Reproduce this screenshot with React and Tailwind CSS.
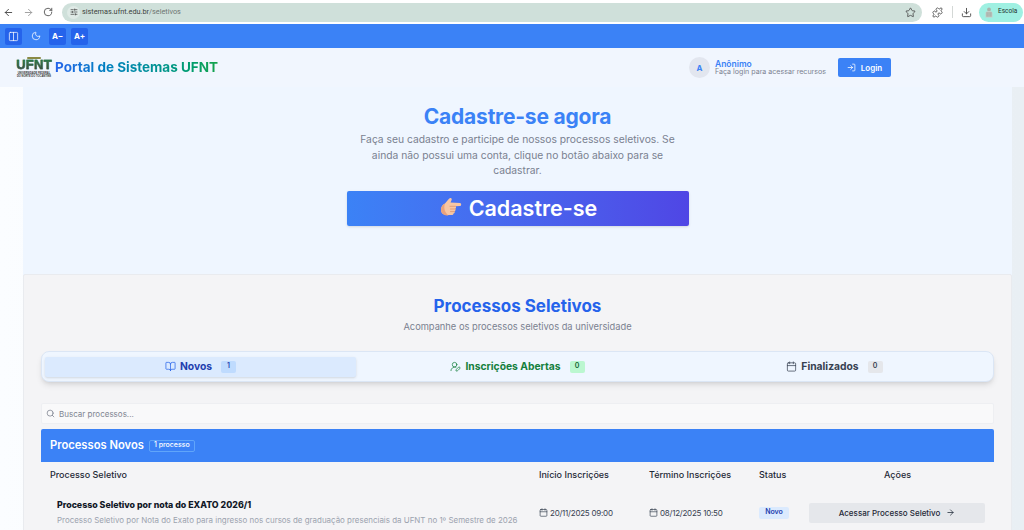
import React from 'react';
import { ArrowLeft, ArrowRight, RotateCw, SlidersHorizontal, Star, Puzzle, Download, Columns2, Moon, LogIn, BookOpen, UserRoundPen, Calendar, Search } from 'lucide-react';

const font = { fontFamily: '"Inter", "Liberation Sans", sans-serif' };
const chromeFont = { fontFamily: '"Roboto", sans-serif' };

const PointingHand = () => (
  <svg width="22" height="22" viewBox="0 0 22 22">
    <path d="M1 13c0-3 1.500-5.500 4-6.500C6.500 4.500 8.500 2 10 1c1.500-.5 2.200 1 1.500 2.200L10.500 5.500l9.500.4c1.600.1 1.600 3 0 3.100l-4.500.3c.8.7.7 2-.2 2.500.6.800.3 2-.6 2.400.4.900-.1 2-1.200 2.200-.1 1-.9 1.600-1.900 1.600H8.500C4 18.500 1 16.500 1 13z" fill="#f7c6a3" />
    <path d="M1 13c0-3 1.500-5.500 4-6.500-1 2.500-1 6 .5 8.500.8 1.300 2 2.600 3 3.500C4 18.500 1 16.500 1 13z" fill="#e9a27c" />
    <path d="M10 9.300h5.300M10.500 12h5M10.500 14.600h4" stroke="#dc9470" strokeWidth=".8" strokeLinecap="round" fill="none" />
  </svg>
);

const ChromeBar = () => (
  <div className="h-6 bg-white flex items-center text-[#474747]">
    <div className="flex items-center w-[62px] pl-[3px] gap-[9px] shrink-0">
      <ArrowLeft size={11} strokeWidth={2} />
      <ArrowRight size={11} strokeWidth={2} className="text-[#9a9a9a]" />
      <RotateCw size={10} strokeWidth={2} />
    </div>
    <div className="w-[860px] h-[19px] rounded-full bg-[#cfe0da] flex items-center pl-[5px] pr-[6px] shrink-0">
      <span className="w-[13px] h-[13px] rounded-full bg-[#dfeae6] flex items-center justify-center">
        <SlidersHorizontal size={8} strokeWidth={2.2} />
      </span>
      <span className="ml-[2px] text-[7.300px] text-[#3d4440]" style={chromeFont}>
        sistemas.ufnt.edu.br<span className="text-[#6d7571]">/seletivos</span>
      </span>
      <Star size={11} strokeWidth={1.8} className="ml-auto" />
    </div>
    <Puzzle size={11} strokeWidth={1.8} className="ml-[10px]" />
    <span className="w-px h-3 bg-[#d4d8d6] ml-[9px]" />
    <Download size={11} strokeWidth={2} className="ml-[8px]" />
    <div className="ml-[7px] w-[44px] h-[19px] rounded-full bg-[#9ff0e2] flex items-center pl-[5px] gap-[4px]">
      <svg width="10" height="13" viewBox="0 0 13 15">
        <circle cx="6.500" cy="3.500" r="2.500" fill="#a9b4ac" />
        <path d="M2 14V8c0-1.500 2-2.500 4.500-2.500S11 6.500 11 8v6z" fill="#c8cec8" />
        <path d="M4 7v6M6.500 7v6M9 7v6" stroke="#7d8a80" strokeWidth=".8" />
      </svg>
      <span className="text-[6.500px] text-[#24302c]" style={chromeFont}>Escola</span>
    </div>
  </div>
);

const ToolBar = () => (
  <div className="h-6 bg-[#3b82f6] flex items-center pl-[5px] gap-[5px] text-white">
    <span className="w-[17px] h-[17px] rounded-[2px] bg-[#2563eb] flex items-center justify-center">
      <Columns2 size={11} strokeWidth={1.6} />
    </span>
    <span className="w-[17px] h-[17px] flex items-center justify-center">
      <Moon size={10} strokeWidth={1.8} />
    </span>
    <span className="w-[17px] h-[17px] rounded-[2px] bg-[#2563eb] flex items-center justify-center text-[8px] font-bold">A−</span>
    <span className="w-[17px] h-[17px] rounded-[2px] bg-[#2563eb] flex items-center justify-center text-[8px] font-bold">A+</span>
  </div>
);

const Logo = () => (
  <div className="w-[34px] flex flex-col items-center leading-none" style={{ fontFamily: '"Liberation Sans", sans-serif' }}>
    <span className="h-[2px] w-[14px] bg-[#8a8a45] rounded-full" />
    <span className="text-[13px] tracking-[0.02em] font-bold leading-[12px] bg-gradient-to-b from-[#1f8a4c] to-[#37423c] bg-clip-text text-transparent [-webkit-text-stroke:0.4px_#2c5a40]">UFNT</span>
    <span className="mt-[1px] text-[2.600px] leading-[3px] font-bold text-[#333] whitespace-nowrap">UNIVERSIDADE FEDERAL</span>
    <span className="text-[2.600px] leading-[3px] font-bold text-[#333] whitespace-nowrap">DO NORTE DO TOCANTINS</span>
  </div>
);

const Header = () => (
  <header className="h-[39px] bg-[#f1f6fe] flex items-center pl-[17px]">
    <Logo />
    <h1 className="ml-[4px] text-[13.500px] font-bold bg-gradient-to-r from-[#2563eb] to-[#16a34a] bg-clip-text text-transparent">Portal de Sistemas UFNT</h1>
    <div className="ml-auto flex items-center mr-[133px]">
      <span className="w-[21px] h-[21px] rounded-full bg-[#e2e6ef] flex items-center justify-center text-[8px] font-bold text-[#3b82f6]">A</span>
      <div className="ml-[5px] leading-[8px]">
        <div className="text-[8.500px] font-semibold text-[#3b82f6]">Anônimo</div>
        <div className="text-[7.100px] text-[#7a8190]">Faça login para acessar recursos</div>
      </div>
      <button className="ml-[12px] w-[53px] h-[19px] rounded-[2px] bg-[#3b82f6] text-white text-[8px] font-semibold flex items-center justify-center gap-[5px]">
        <LogIn size={9} strokeWidth={2} />
        Login
      </button>
    </div>
  </header>
);

const Hero = () => (
  <section className="flex flex-col items-center pt-[18px] h-[187px]">
    <h2 className="text-[21px] leading-[24px] font-bold text-[#3b82f6] tracking-[-0.01em]">Cadastre-se agora</h2>
    <p className="mt-[3px] w-[330px] text-center text-[10.300px] leading-[15.500px] text-[#7a8190]">
      Faça seu cadastro e participe de nossos processos seletivos. Se ainda não possui uma conta, clique no botão abaixo para se cadastrar.
    </p>
    <button className="mt-[12px] w-[342px] h-[35px] pl-[2px] rounded-[2px] bg-gradient-to-r from-[#3b82f6] to-[#4f46e5] text-white text-[21.500px] font-semibold flex items-center justify-center gap-[7px] shadow-sm">
      <PointingHand />
      Cadastre-se
    </button>
  </section>
);

const Tab = ({ icon, label, count, active, textClass, badgeClass }) => (
  <div className={`flex-1 h-[20px] mx-[3px] flex items-center justify-center gap-[4px] rounded-[2px] ${active ? 'bg-[#dbeafe] shadow-sm' : ''}`}>
    {icon}
    <span className={`text-[10.300px] font-bold ${textClass}`}>{label}</span>
    <span className={`ml-[5px] w-[15px] h-[12px] rounded-[2px] flex items-center justify-center text-[7px] font-semibold ${badgeClass}`}>{count}</span>
  </div>
);

const Tabs = () => (
  <div className="mt-[17px] h-[31px] rounded-[8px] bg-[#eff6ff] border border-[#dbe6f5] shadow-md flex items-center">
    <Tab active icon={<BookOpen size={11} strokeWidth={1.6} className="text-[#2563eb]" />} label="Novos" count="1" textClass="text-[#1e40af]" badgeClass="bg-[#bfdbfe] text-[#1e40af]" />
    <Tab icon={<UserRoundPen size={11} strokeWidth={1.6} className="text-[#15803d]" />} label="Inscrições Abertas" count="0" textClass="text-[#15803d]" badgeClass="bg-[#bbf7d0] text-[#166534]" />
    <Tab icon={<Calendar size={11} strokeWidth={1.6} className="text-[#374151]" />} label="Finalizados" count="0" textClass="text-[#374151]" badgeClass="bg-[#e5e7eb] text-[#374151]" />
  </div>
);

const DateCell = ({ value }) => (
  <div className="flex items-center gap-[2px] text-[8px] tracking-[-0.03em] text-[#374151]">
    <Calendar size={9} strokeWidth={1.8} />
    {value}
  </div>
);

const Table = () => (
  <div className="mt-[5px]">
    <div className="h-[33px] bg-[#3b82f6] rounded-t-[2px] flex items-center pl-[9px]">
      <span className="text-[11.200px] font-semibold text-white">Processos Novos</span>
      <span className="ml-[5px] h-[12px] w-[46px] justify-center rounded-[2px] border border-[#60a5fa] text-white text-[7px] font-medium flex items-center">1 processo</span>
    </div>
    <div className="grid grid-cols-[489px_110px_110px_50px_1fr] items-center h-[26px] pl-[9px] text-[9px] font-medium text-[#1f2937]">
      <span>Processo Seletivo</span>
      <span>Início Inscrições</span>
      <span>Término Inscrições</span>
      <span>Status</span>
      <span className="text-center pr-[8px]">Ações</span>
    </div>
    <div className="grid grid-cols-[482px_110px_110px_50px_1fr] items-center pl-[16px] pt-[10px]">
      <div>
        <div className="text-[8.800px] leading-[13px] font-extrabold text-[#111827]">Processo Seletivo por nota do EXATO 2026/1</div>
        <div className="mt-[3px] text-[7.950px] leading-[13px] text-[#9ca3af] whitespace-nowrap">Processo Seletivo por Nota do Exato para ingresso nos cursos de graduação presenciais da UFNT no 1º Semestre de 2026</div>
      </div>
      <DateCell value="20/11/2025 09:00" />
      <DateCell value="08/12/2025 10:50" />
      <span className="w-[30px] h-[12px] rounded-[2px] bg-[#dbeafe] text-[#1e40af] text-[7px] font-semibold flex items-center justify-center">Novo</span>
      <button className="w-[176px] h-[20px] rounded-[2px] bg-[#e5e7eb] text-[#1f2937] text-[8px] font-medium flex items-center justify-center gap-[6px]">
        Acessar Processo Seletivo
        <ArrowRight size={9} strokeWidth={2} />
      </button>
    </div>
  </div>
);

const App = () => (
  <div className="h-[530px] overflow-hidden bg-gradient-to-r from-[#fbfdff] to-[#e9eff4]" style={font}>
    <ChromeBar />
    <ToolBar />
    <Header />
    <main className="ml-[23px] mr-[12px] bg-[#eff6ff] h-[443px]">
      <Hero />
      {/* Processos */}
      <section className="h-[300px] bg-[#f4f4f6] border border-[#e9ebef] rounded-[2px] px-[17px] pt-[19px] overflow-hidden">
        <h2 className="text-center text-[17px] leading-[24px] font-bold text-[#2563eb]">Processos Seletivos</h2>
        <p className="mt-[2px] text-center text-[9.300px] leading-[14px] text-[#7a8190]">Acompanhe os processos seletivos da universidade</p>
        <Tabs />
        <div className="mt-[21px] h-[21px] bg-[#f9f9fa] border border-[#eeeff2] rounded-[2px] flex items-center pl-[4px] gap-[4px]">
          <Search size={9} strokeWidth={1.8} className="text-[#6b7280]" />
          <span className="text-[8px] text-[#808591]">Buscar processos...</span>
        </div>
        <Table />
      </section>
    </main>
  </div>
);

export default App;
